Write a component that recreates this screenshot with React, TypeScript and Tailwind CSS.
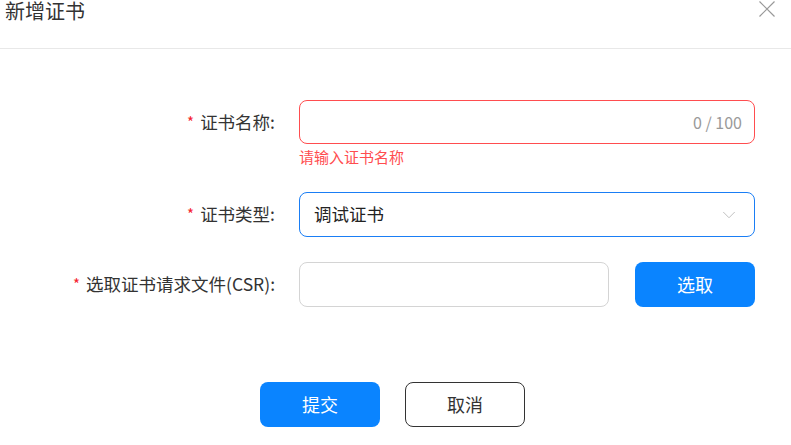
import { ChevronDown } from 'lucide-react'

const FONT = { fontFamily: '"Noto Sans CJK SC", "Noto Sans", sans-serif' }

function Label({ text }: { text: string }) {
  return (
    <div className="flex w-[275px] shrink-0 items-center justify-end text-[17.5px] text-[#333]">
      <span className="mr-[6px] text-[15px] text-[#f5222d]">*</span>
      {text}
    </div>
  )
}

export default function App() {
  return (
    <div className="relative h-[445px] w-[791px] overflow-hidden bg-white" style={FONT}>
      <div className="flex h-[49px] items-start justify-between border-b border-[#e8e8e8] pl-[5px] pr-[16px]">
        <h2 className="mt-[1px] text-[20px] leading-[20px] text-[#333]">新增证书</h2>
        <svg className="mt-[1px] h-[16px] w-[16px]" viewBox="0 0 16 16" fill="none" stroke="#999" strokeWidth="1.2">
          <path d="M0.5 0.5 15.5 15.5M15.5 0.5 0.5 15.5" />
        </svg>
      </div>

      <div className="mt-[51px] flex flex-col">
        <div className="flex items-center">
          <Label text="证书名称:" />
          <div className="ml-[24px] flex h-[44px] w-[456px] items-center justify-end rounded-[8px] border border-[#ff4d4f] px-[12px] text-[16px] text-[#999]">
            0 / 100
          </div>
        </div>
        <p className="ml-[299px] mt-[3px] text-[15px] leading-[20px] text-[#ff4d4f]">请输入证书名称</p>

        <div className="mt-[25px] flex items-center">
          <Label text="证书类型:" />
          <div className="ml-[24px] flex h-[45px] w-[456px] items-center justify-between rounded-[8px] border border-[#1a7ef5] pl-[14px] pr-[14px] text-[17.5px] text-[#222]">
            调试证书
            <ChevronDown className="h-[22px] w-[22px] text-[#bbb]" strokeWidth={1} />
          </div>
        </div>

        <div className="mt-[25px] flex items-center">
          <Label text="选取证书请求文件(CSR):" />
          <div className="ml-[24px] h-[45px] w-[310px] rounded-[8px] border border-[#d4d4d4]" />
          <button
            type="button"
            className="ml-[26px] flex h-[45px] w-[120px] items-center justify-center rounded-[8px] bg-[#0a84ff] text-[18px] text-white"
          >
            选取
          </button>
        </div>

        <div className="mt-[75px] flex justify-center gap-[25px] pr-[6px]">
          <button
            type="button"
            className="flex h-[45px] w-[120px] items-center justify-center rounded-[8px] bg-[#0a84ff] text-[18px] text-white"
          >
            提交
          </button>
          <button
            type="button"
            className="flex h-[45px] w-[120px] items-center justify-center rounded-[8px] border border-[#333] text-[18px] text-[#333]"
          >
            取消
          </button>
        </div>
      </div>
    </div>
  )
}
